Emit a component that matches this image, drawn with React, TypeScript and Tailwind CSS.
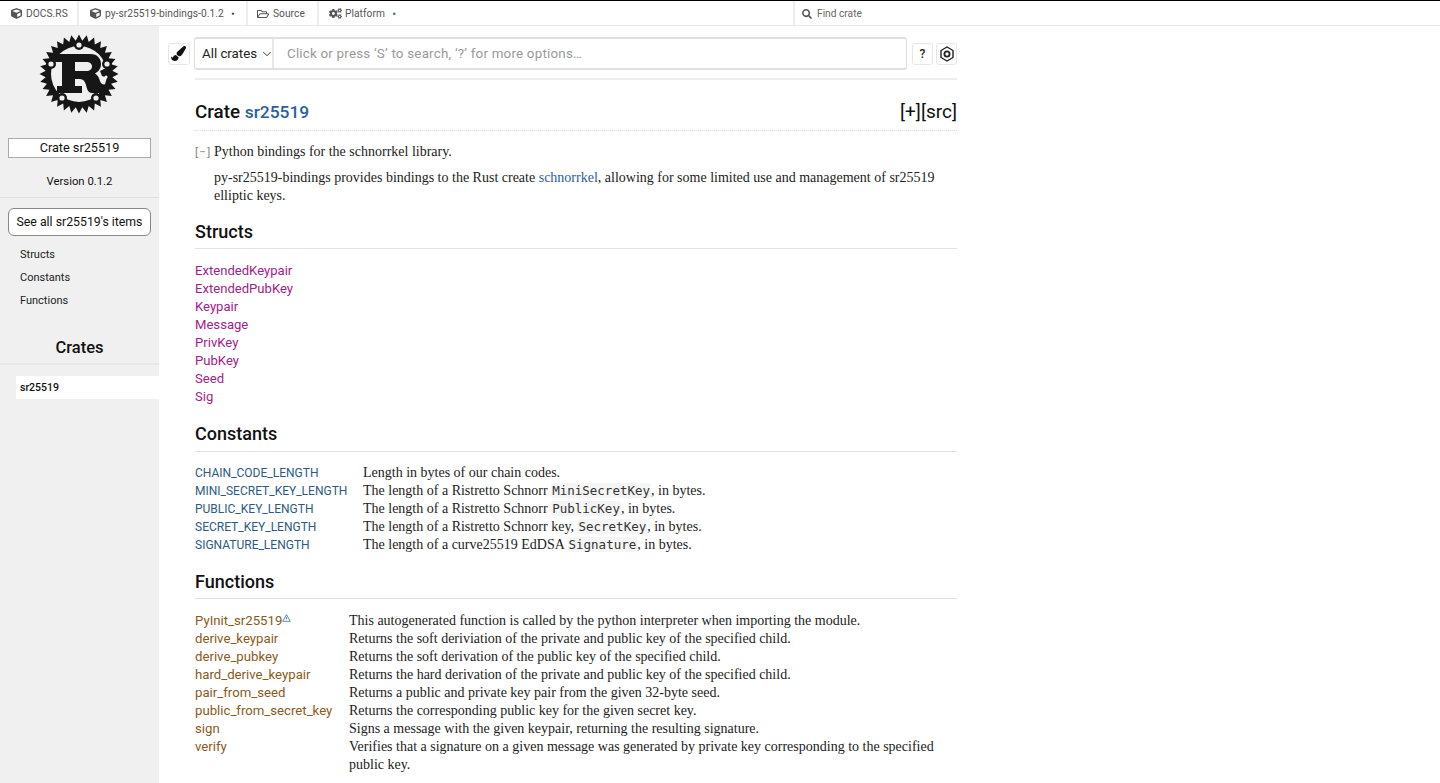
import { FaCube, FaRegFolderOpen, FaCogs, FaSearch, FaPaintBrush } from "react-icons/fa";
import { ChevronDown } from "lucide-react";

const sans = "font-['Roboto','Liberation_Sans',sans-serif]";
const serif = "font-['Liberation_Serif',serif]";

function gearPath() {
  const n = 32;
  const c = 39;
  const out = 39.5;
  const inn = 33.5;
  const pts: string[] = [];
  for (let i = 0; i < n; i++) {
    const a = (i / n) * Math.PI * 2 - Math.PI / 2;
    const d = (Math.PI * 2) / n;
    const list: [number, number][] = [
      [a - d * 0.5, inn],
      [a, out],
    ];
    for (const [t, r] of list) pts.push(`${(c + Math.cos(t) * r).toFixed(2)},${(c + Math.sin(t) * r).toFixed(2)}`);
  }
  return pts.join(" ");
}

function RustLogo() {
  const holes: [number, number][] = [
    [39, 10],
    [11, 29],
    [67, 29],
    [22, 63],
    [56, 63],
  ];
  return (
    <svg width="80" height="80" viewBox="-1 -1 80 80" className="block">
      <polygon points={gearPath()} fill="#161616" />
      <circle cx="39" cy="39" r="28" fill="#f0f0f0" />
      {holes.map(([x, y]) => (
        <g key={x}>
          <circle cx={x} cy={y} r="5" fill="#161616" />
          <circle cx={x} cy={y} r="2.6" fill="#f0f0f0" />
        </g>
      ))}
      <path
        fillRule="evenodd"
        d="M15 19 H50 C58 19 61 24 61 29 C61 34 58 37 55 38.5 C58 40 59 43 60 46 C61 49 63 50 66 49 L66 58 H52 C48 58 47 54 46 50 C45 46 43 44 40 44 H35 V51 H42 V58 H17 V51 H22 V27 H15 Z M35 27 V36 H46 C50 36 52 34 52 31.5 C52 29 50 27 46 27 Z"
        fill="#161616"
      />
      <path d="M60 36 L66 33 L72 38 L68 43 L62 41 Z" fill="#161616" />
      <circle cx="66" cy="42" r="1.6" fill="#f0f0f0" />
    </svg>
  );
}

function NavItem({ icon, label, caret, className }: { icon: React.ReactNode; label: string; caret?: boolean; className: string }) {
  return (
    <div className={`flex h-full items-center whitespace-nowrap border-r-2 border-[#eeeeee] pt-px text-[10.2px] tracking-[0.05px] text-[#555] ${className}`}>
      {icon}
      <span>{label}</span>
      {caret && <span className="ml-[8px] text-[8px] leading-none text-[#444]">▪</span>}
    </div>
  );
}

function Code({ children }: { children: string }) {
  return <code className="rounded-[3px] bg-[#f5f5f5] px-[1px] font-['DejaVu_Sans_Mono','Liberation_Mono',monospace] text-[12.5px] leading-none text-[#333]">{children}</code>;
}

function Section({ title, height }: { title: string; height: string }) {
  return (
    <h2 className={`border-b border-[#e0e0e0] text-[18px] leading-[26px] font-medium text-[#111] ${height} ${sans}`}>{title}</h2>
  );
}

function Row({ cols, name, color, nameSize, children }: { cols: string; name: React.ReactNode; color: string; nameSize: string; children: React.ReactNode }) {
  return (
    <div className={`grid ${cols} leading-[18px]`}>
      <div className={`${sans} ${nameSize} ${color}`}>{name}</div>
      <div className={`${serif} text-[14px] text-[#222]`}>{children}</div>
    </div>
  );
}

const structs = ["ExtendedKeypair", "ExtendedPubKey", "Keypair", "Message", "PrivKey", "PubKey", "Seed", "Sig"];

const funcs: [string, string][] = [
  ["derive_keypair", "Returns the soft deriviation of the private and public key of the specified child."],
  ["derive_pubkey", "Returns the soft derivation of the public key of the specified child."],
  ["hard_derive_keypair", "Returns the hard derivation of the private and public key of the specified child."],
  ["pair_from_seed", "Returns a public and private key pair from the given 32-byte seed."],
  ["public_from_secret_key", "Returns the corresponding public key for the given secret key."],
  ["sign", "Signs a message with the given keypair, returning the resulting signature."],
  ["verify", "Verifies that a signature on a given message was generated by private key corresponding to the specified public key."],
];

const cCols = "grid-cols-[168px_1fr]";
const cColor = "text-[#2b5a85]";
const cSize = "text-[12px]";

export default function App() {
  return (
    <div className={`h-[783px] w-[1440px] overflow-hidden bg-white ${sans}`}>
      <header className="flex h-[26px] border-t border-b border-t-black border-b-[#e8e8e8] bg-white">
        <NavItem className="w-[79px] pl-[11px]" icon={<FaCube className="mr-[4px] text-[11px] text-[#555]" />} label="DOCS.RS" />
        <NavItem className="w-[169px] pl-[11px]" icon={<FaCube className="mr-[4px] text-[11px] text-[#555]" />} label="py-sr25519-bindings-0.1.2" caret />
        <NavItem className="w-[71px] pl-[9px]" icon={<FaRegFolderOpen className="mr-[4px] text-[12px] text-[#555]" />} label="Source" />
        <NavItem className="w-[476px] pl-[10px]" icon={<FaCogs className="mr-[3px] text-[13px] text-[#555]" />} label="Platform" caret />
        <div className="flex items-center pl-[7px] pt-px text-[10.2px] text-[#666]">
          <FaSearch className="mr-[5px] text-[10px] text-[#555]" />
          Find crate
        </div>
      </header>

      <div className="flex h-[757px]">
        <aside className="flex h-full w-[159px] shrink-0 flex-col bg-[#f0f0f0]">
          <div className="ml-[39px] mt-[8px]">
            <RustLogo />
          </div>
          <div className="mx-[8px] mt-[24px] flex h-[20px] items-center justify-center border border-[#aaa] bg-white pb-[1px] text-[12.7px] text-[#111]">
            Crate sr25519
          </div>
          <p className="mt-[14px] h-[20px] text-center text-[11.3px] leading-[20px] text-[#111]">Version 0.1.2</p>
          <div className="mt-[5px] h-px bg-[#e0e0e0]" />
          <div className="mx-[8px] mt-[10px] flex h-[28px] items-center justify-center rounded-[6px] border border-[#888] bg-white text-[12.3px] text-[#111]">
            See all sr25519's items
          </div>
          <ul className="mt-[7px] pl-[20px] text-[11px] leading-[23px] text-[#222]">
            <li>Structs</li>
            <li>Constants</li>
            <li>Functions</li>
          </ul>
          <h3 className="mt-[24px] text-center text-[16.5px] leading-[24px] font-medium text-[#111]">Crates</h3>
          <div className="mt-[3px] h-[2px] bg-[#e8e8e8]" />
          <div className="ml-[16px] mt-[11px] flex h-[23px] items-center bg-white pl-[4px] text-[10.5px] font-medium text-[#111]">sr25519</div>
        </aside>

        <div className="w-[798px] pl-[9px]">
          <div className="flex items-center pt-[11px]">
            <div className="flex h-[22px] w-[22px] items-center justify-center rounded-[3px] border border-[#e6e6e6] bg-white text-[15px] text-[#111]">
              <FaPaintBrush />
            </div>
            <div className="ml-[4px] flex h-[33px] w-[714px] rounded-[3px] border border-t-2 border-b-2 border-[#e0e0e0]">
              <div className="flex w-[79px] shrink-0 items-center justify-start gap-[3px] whitespace-nowrap border-r-2 border-[#e8e8e8] pl-[7px] text-[13.3px] text-[#222]">
                All crates <ChevronDown size={14} strokeWidth={1.5} className="shrink-0 text-[#222]" />
              </div>
              <div className="flex items-center pl-[13px] pt-[2px] text-[13.4px] tracking-[0.2px] text-[#999]">Click or press ‘S’ to search, ‘?’ for more options…</div>
            </div>
            <div className="ml-[5px] flex h-[22px] w-[21px] items-center justify-center rounded-[3px] border border-[#e6e6e6] text-[12px] font-medium text-[#222]">?</div>
            <div className="ml-[3px] flex h-[22px] w-[21px] items-center justify-center rounded-[3px] border border-[#e6e6e6]">
              <svg width="16" height="16" viewBox="0 0 16 16" fill="none" stroke="#222" strokeWidth="1.4">
                <path d="M8 1 L14 4.5 V11.5 L8 15 L2 11.5 V4.5 Z" strokeLinejoin="round" />
                <circle cx="8" cy="8" r="2.6" strokeWidth="1.8" />
              </svg>
            </div>
          </div>

          <div className="ml-[27px] mt-[8px] w-[762px] border-t-2 border-[#eeeeee]">
            <h1 className="flex h-[51px] items-end justify-between border-b border-dotted border-[#ddd] pb-[5px] text-[18.8px] leading-[26px] font-medium text-[#111]">
              <span>
                Crate <span className="text-[17.4px] text-[#2a5ea0]">sr25519</span>
              </span>
              <span className="text-[19px] font-normal">[+][src]</span>
            </h1>

            <div className={`mt-[12px] flex text-[14px] leading-[18px] text-[#222] ${serif}`}>
              <span className={`w-[19px] text-[11.5px] tracking-[1.3px] text-[#888] ${sans}`}>[−]</span>
              <span>Python bindings for the schnorrkel library.</span>
            </div>
            <p className={`ml-[19px] mt-[8px] text-[14px] leading-[18px] text-[#222] ${serif}`}>
              py-sr25519-bindings provides bindings to the Rust create <span className="text-[#2a5ea0]">schnorrkel</span>, allowing for some limited use and management of sr25519 elliptic keys.
            </p>

            <div className="mt-[14px]">
              <Section title="Structs" height="h-[30px]" />
            </div>
            <div className="mt-[13px] text-[13.1px] leading-[18px] text-[#a3218a]">
              {structs.map((s) => (
                <div key={s}>{s}</div>
              ))}
            </div>

            <div className="mt-[15px]">
              <Section title="Constants" height="h-[31px]" />
            </div>
            <div className="mt-[12px]">
              <Row cols={cCols} color={cColor} nameSize={cSize} name="CHAIN_CODE_LENGTH">Length in bytes of our chain codes.</Row>
              <Row cols={cCols} color={cColor} nameSize={cSize} name="MINI_SECRET_KEY_LENGTH">The length of a Ristretto Schnorr <Code>MiniSecretKey</Code>, in bytes.</Row>
              <Row cols={cCols} color={cColor} nameSize={cSize} name="PUBLIC_KEY_LENGTH">The length of a Ristretto Schnorr <Code>PublicKey</Code>, in bytes.</Row>
              <Row cols={cCols} color={cColor} nameSize={cSize} name="SECRET_KEY_LENGTH">The length of a Ristretto Schnorr key, <Code>SecretKey</Code>, in bytes.</Row>
              <Row cols={cCols} color={cColor} nameSize={cSize} name="SIGNATURE_LENGTH">The length of a curve25519 EdDSA <Code>Signature</Code>, in bytes.</Row>
            </div>

            <div className="mt-[15px]">
              <Section title="Functions" height="h-[30px]" />
            </div>
            <div className="mt-[13px]">
              <Row
                cols="grid-cols-[154px_1fr]"
                color="text-[#8a5a1c]"
                nameSize="text-[13.2px]"
                name={
                  <span className="inline-flex items-start">
                    PyInit_sr25519
                    <svg width="9" height="8" viewBox="0 0 9 8" className="mt-[2px]" fill="none" stroke="#4a7fa0" strokeWidth="0.9">
                      <path d="M4.5 0.7 L8.3 7.3 H0.7 Z" />
                      <path d="M4.5 3 V5.5" />
                    </svg>
                  </span>
                }
              >
                This autogenerated function is called by the python interpreter when importing the module.
              </Row>
              {funcs.map(([n, d]) => (
                <Row key={n} cols="grid-cols-[154px_1fr]" color="text-[#8a5a1c]" nameSize="text-[13.2px]" name={n}>
                  {d}
                </Row>
              ))}
            </div>
          </div>
        </div>
      </div>
    </div>
  );
}
